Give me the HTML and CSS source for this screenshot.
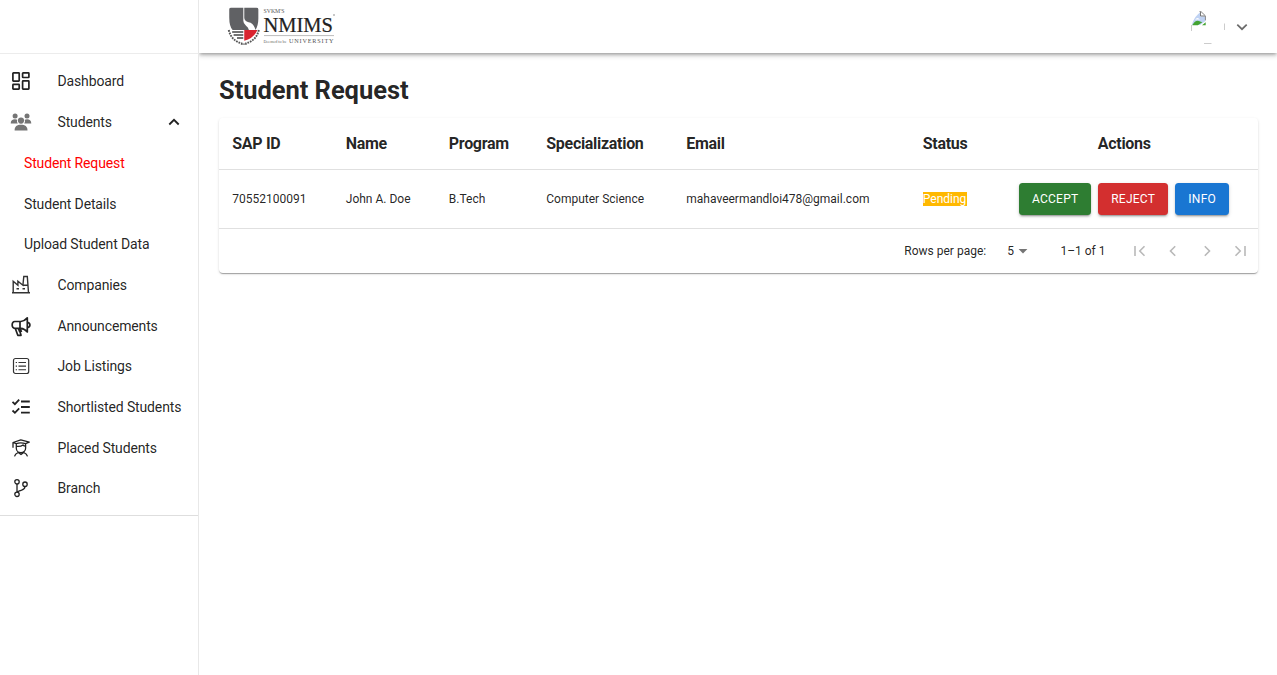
FILE: index.html
```html
<!DOCTYPE html>
<html lang="en">
<head>
<meta charset="utf-8">
<title>Student Request</title>
<link rel="stylesheet" href="styles.css">
</head>
<body>
<div class="app">
  <aside class="sidebar">
    <div class="sidebar-top"></div>
    <nav class="nav">
      <a class="item"><svg class="icon" viewBox="0 0 20 20" fill="none" stroke="#222" stroke-width="1.7"><rect x="1.9" y="1.9" width="6.3" height="8.2" rx=".5"/><rect x="11.6" y="1.9" width="6.3" height="4.6" rx=".5"/><rect x="1.9" y="13.4" width="6.3" height="4.7" rx=".5"/><rect x="11.6" y="9.9" width="6.3" height="8.2" rx=".5"/></svg><span>Dashboard</span></a>
      <a class="item"><svg class="icon" viewBox="0 0 20 20" fill="#757575"><circle cx="4.1" cy="4" r="2.5"/><circle cx="16" cy="4" r="2.5"/><path d="M-.3 11.4C-.3 8.6 1.5 7.2 4 7.2c1 0 1.7.2 2.3.6C5.700 9 6 10.400 6.800 11.400zM20.300 11.400c0-2.800-1.800-4.200-4.300-4.200-1 0-1.700.2-2.300.6.6 1.200.3 2.600-.5 3.600z"/><circle cx="10" cy="8.600" r="3.100"/><path d="M3.600 18.500c0-4 2.300-5.700 6.400-5.700s6.500 1.700 6.500 5.700z"/></svg><span>Students</span><svg class="chev" viewBox="0 0 20 20" fill="none" stroke="#222" stroke-width="1.8"><path d="M5.300 12.500 10 7.800l4.700 4.700"/></svg></a>
      <a class="item sub active">Student Request</a>
      <a class="item sub">Student Details</a>
      <a class="item sub">Upload Student Data</a>
      <a class="item"><svg class="icon" viewBox="0 0 20 20" fill="none" stroke="#333" stroke-width="1.4"><path d="M1 17.700h18M2.200 17.500V6.200l4.700 4V6.200l5 4 .9-8.700h3.500l1.200 16M12 10.200h5"/><path d="M5.500 13.700H8M11.500 13.700H14" stroke-width="1.500"/></svg><span>Companies</span></a>
      <a class="item"><svg class="icon" viewBox="0 0 20 20" fill="none" stroke="#222" stroke-width="1.700" stroke-linejoin="round"><path d="M3.800 5.500h6c2.500-.2 4.700-1.500 6.500-3.600v14c-1.800-2.200-4-3.400-6.500-3.600h-6C.3 12.300.3 5.500 3.800 5.500zM9 5.500v6.800M4.300 12.500l2.500 6.800h3.200l-1-3.500M7.300 12.500l1.500 3.400M9.200 12.500l1.300 3.500M16.500 6.300c3.200.8 3.200 4.600 0 5.400"/></svg><span>Announcements</span></a>
      <a class="item"><svg class="icon" viewBox="0 0 20 20" fill="none" stroke="#333"><rect x="2.500" y="2.500" width="15.200" height="15" rx="2" stroke-width="1.200"/><path d="M7.500 6.500H15M7.500 10.100H15M7.500 13.700H15M4.700 6.500H6M4.700 10.100H6M4.700 13.700H6" stroke-width="1.100"/></svg><span>Job Listings</span></a>
      <a class="item"><svg class="icon" viewBox="0 0 20 20" fill="none" stroke="#222" stroke-width="1.800"><path d="M1.500 4.900l2.400 2.300 4.300-4.500M1.500 13.500l2.400 2.300 4.300-4.500M10 4.500h8.800M10 10h8.800M10 15.700h8.800"/></svg><span>Shortlisted Students</span></a>
      <a class="item"><svg class="icon" viewBox="0 0 20 20" fill="none" stroke="#222" stroke-width="1.300" stroke-linejoin="round"><path d="M2 4.500 9.800 1.900l8.500 2.300-3.800 1.500c-3-1.100-6.300-1.100-9.300 0zM2 4.500v5.300M5.300 5.700v4.500c0 6 9.300 6 9.300 0V5.700M5.500 8.200c3 .7 5-.1 6.500-1.200.7.900 1.500 1.200 2.500 1.200M3.500 18.300c.5-2 1.700-3 3.700-3.800l2.800 2 2.800-2c2 .8 3.200 1.800 3.700 3.800"/></svg><span>Placed Students</span></a>
      <a class="item"><svg class="icon" viewBox="0 0 20 20" fill="none" stroke="#222" stroke-width="1.300"><circle cx="6" cy="3.800" r="2.200"/><circle cx="14" cy="6.200" r="2.200"/><circle cx="6" cy="16.300" r="2.200"/><path d="M6 6v8M14 8.400c0 2.900-2 3.200-4 3.900-2 .7-3.400 1-3.800 2"/></svg><span>Branch</span></a>
    </nav>
  </aside>
  <div class="page">
    <header class="header">
      <svg class="logo" viewBox="0 0 110 42">
        <g transform="translate(.3 -1.200) scale(.97)">
          <path d="M2 4.500q0-1.500 2-1.500h12.500v13.500q0 3 2.800 5 2.200 1.500 3 4.500H5.500Q2 22 2 13z" fill="#606164"/>
          <path d="M17.500 3H30q2 0 2 1.500V14q0 7-3 12-1-5-5-7.500-6.500-1.500-6.500-5z" fill="#606164"/>
          <path d="M17.500 26H31q-3.500 8.500-13.500 11z" fill="#d9232e"/>
          <path d="M5 28h11.500M6.500 31.200h10M10 34.300h6.500" stroke="#444" stroke-width="1.500"/>
          <path d="M1.500 26q2.500 11 14 14M32.500 26q-2.500 11-14 14" fill="none" stroke="#555" stroke-width="2" stroke-dasharray="1.800 1"/>
          <path d="M14 40.500h6" stroke="#555"/>
        </g>
        <text x="36.500" y="7.300" class="logo-small" textLength="21" lengthAdjust="spacingAndGlyphs">SVKM'S</text>
        <text x="36.500" y="25.800" class="logo-name" textLength="69.500" lengthAdjust="spacingAndGlyphs">NMIMS</text>
        <circle cx="107" cy="9" r=".7" fill="#666"/>
        <path d="M37 29.600H107" stroke="#aaa" stroke-width=".8"/>
        <text x="36.500" y="37.300" class="logo-deemed" textLength="23" lengthAdjust="spacingAndGlyphs">Deemed to be</text>
        <text x="62" y="37.300" class="logo-uni" textLength="44.500">UNIVERSITY</text>
      </svg>
      <div class="account">
        <svg class="avatar" viewBox="0 0 34 34"><path d="M.8 15Q2.500 8.500 7 4.200L9.500 2v4.500h5V11L9 15z" fill="#bfd2f3"/><path d="M.5 21V15M33.500 13.500v6.500M13 33.500h7.500" stroke="#ccc" fill="none"/><path d="M9.500 2v4h4.500" stroke="#777" fill="none"/><path d="M8.500 1.600h1.500l4.400 4.200v4.500" stroke="#888" fill="none"/><path d="M4 9.500q2.500-3.200 5 0z" fill="#fff"/><path d="M1.300 15.200q3-5.200 6.500-4.200l3.500 1.300-4.500 2.900z" fill="#43a332"/><path d="M11 15.200l3.700-3v3z" fill="#43a332"/></svg>
        <svg class="chev" viewBox="0 0 20 20" fill="none" stroke="#6b6b6b" stroke-width="1.700"><path d="M5.300 7.600 10 12.200l4.700-4.600"/></svg>
      </div>
    </header>
    <main class="main">
      <h1>Student Request</h1>
      <section class="card">
        <table>
          <colgroup><col class="c1"><col class="c2"><col class="c3"><col class="c4"><col class="c5"><col class="c6"><col></colgroup>
          <thead><tr><th>SAP ID</th><th>Name</th><th>Program</th><th>Specialization</th><th>Email</th><th>Status</th><th class="center">Actions</th></tr></thead>
          <tbody><tr><td>70552100091</td><td>John A. Doe</td><td>B.Tech</td><td>Computer Science</td><td>mahaveermandloi478@gmail.com</td><td><span class="pending">Pending</span></td><td><div class="actions"><button class="accept">ACCEPT</button><button class="reject">REJECT</button><button class="info">INFO</button></div></td></tr></tbody>
        </table>
        <div class="pager">
          <span class="rows">Rows per page:</span>
          <span class="size">5</span><svg class="caret" viewBox="0 0 10 5"><path d="M.6 0h8.800L5 4.400z" fill="#757575"/></svg>
          <span class="range">1–1 of 1</span>
          <div class="arrows">
            <svg viewBox="0 0 20 20"><path d="M5 5v10M14.500 5.300 9.800 10l4.700 4.700"/></svg>
            <svg viewBox="0 0 20 20"><path d="M12.200 5.300 7.500 10l4.700 4.700"/></svg>
            <svg viewBox="0 0 20 20"><path d="M7.800 5.300 12.500 10l-4.700 4.700"/></svg>
            <svg viewBox="0 0 20 20"><path d="M15 5v10M5.500 5.300 10.200 10l-4.700 4.700"/></svg>
          </div>
        </div>
      </section>
    </main>
  </div>
</div>
</body>
</html>
```
FILE: styles.css
```css
* { box-sizing: border-box; }
body { margin: 0; font-family: Roboto, sans-serif; color: rgba(0,0,0,.87); background: #fff; }
.app { display: flex; height: 675px; overflow: hidden; }
.sidebar { width: 199px; flex: none; border-right: 1px solid #e8e8e8; }
.sidebar-top { height: 54px; border-bottom: 1px solid #ececec; }
.nav { padding: 7.100px 0 6.400px; border-bottom: 1px solid #dedede; }
.item { display: flex; align-items: center; height: 40.700px; padding-left: 11px; font-size: 14px; letter-spacing: -.14px; white-space: nowrap; }
.item .icon { width: 20px; height: 20px; margin-right: 26.500px; flex: none; overflow: visible; }
.item .chev { width: 20px; height: 20px; margin-left: auto; margin-right: 14px; }
.sub { padding-left: 24px; }
.active { color: #f00; }
.page { flex: 1; min-width: 0; }
.header { display: flex; align-items: center; justify-content: space-between; height: 53px; margin-bottom: 1px; padding: 0 25.500px 0 28px; box-shadow: 0 2px 3px -1px rgba(0,0,0,.26), 0 3px 4px rgba(0,0,0,.13), 0 1px 8px rgba(0,0,0,.1); clip-path: inset(0 0 -12px 0); }
.logo { width: 110px; height: 42px; overflow: visible; }
.logo-small { font: 5.500px "Liberation Serif", serif; fill: #555; }
.logo-name { font: 21.500px "Liberation Serif", serif; fill: #222; stroke: #222; stroke-width: .2px; }
.logo-deemed { font: 5px "Liberation Serif", serif; fill: #666; }
.logo-uni { font: 6.200px "Liberation Serif", serif; fill: #555; }
.account { display: flex; align-items: center; gap: 6.500px; }
.avatar { width: 34px; height: 34px; }
.account .chev { width: 20px; height: 20px; }
.main { padding: 20px 19px 0 20px; }
h1 { margin: 0 0 12px; padding-top: 1px; font-size: 25.500px; font-weight: 700; line-height: 31px; letter-spacing: -.05px; }
.card { border-radius: 4px; box-shadow: 0 2px 1px -1px rgba(0,0,0,.2), 0 1px 1px rgba(0,0,0,.14), 0 1px 3px rgba(0,0,0,.12); height: 155px; }
table { width: 100%; border-collapse: separate; border-spacing: 0; table-layout: fixed; }
.c1 { width: 113.500px; }
.c2 { width: 103px; }
.c3 { width: 97.500px; }
.c4 { width: 140px; }
.c5 { width: 236.500px; }
.c6 { width: 81px; }
th, td { padding: 0 0 0 13.300px; text-align: left; border-bottom: 1px solid #e0e0e0; white-space: nowrap; }
th { height: 52px; font-size: 16px; font-weight: 700; letter-spacing: -.3px; }
td { height: 59px; font-size: 12px; letter-spacing: 0; }
th.center { text-align: center; padding: 0; }
.pending { padding-right: 1px; background: #ffb800; color: #fff; }
.actions { display: flex; gap: 7px; padding-left: 15px; }
button { height: 32px; padding: 0; border: 0; border-radius: 3.500px; color: #fff; font: 400 12px Roboto, sans-serif; letter-spacing: .25px; text-indent: .8px; box-shadow: 0 3px 1px -2px rgba(0,0,0,.2), 0 2px 2px rgba(0,0,0,.14), 0 1px 4px rgba(0,0,0,.12); }
.accept { width: 72px; background: #2e7d32; }
.reject { width: 70px; background: #d32f2f; }
.info { width: 54px; background: #1976d2; }
.pager { display: flex; align-items: center; justify-content: flex-end; height: 44px; padding-right: 8px; font-size: 12px; letter-spacing: 0; }
.size { margin-left: 21px; }
.caret { width: 10px; height: 5px; margin-left: 4.500px; }
.range { margin-left: 32px; }
.arrows { display: flex; gap: 13.500px; margin-left: 24px; }
.arrows svg { width: 20px; height: 20px; fill: none; stroke: #b9b9b9; stroke-width: 1.600; }
```
